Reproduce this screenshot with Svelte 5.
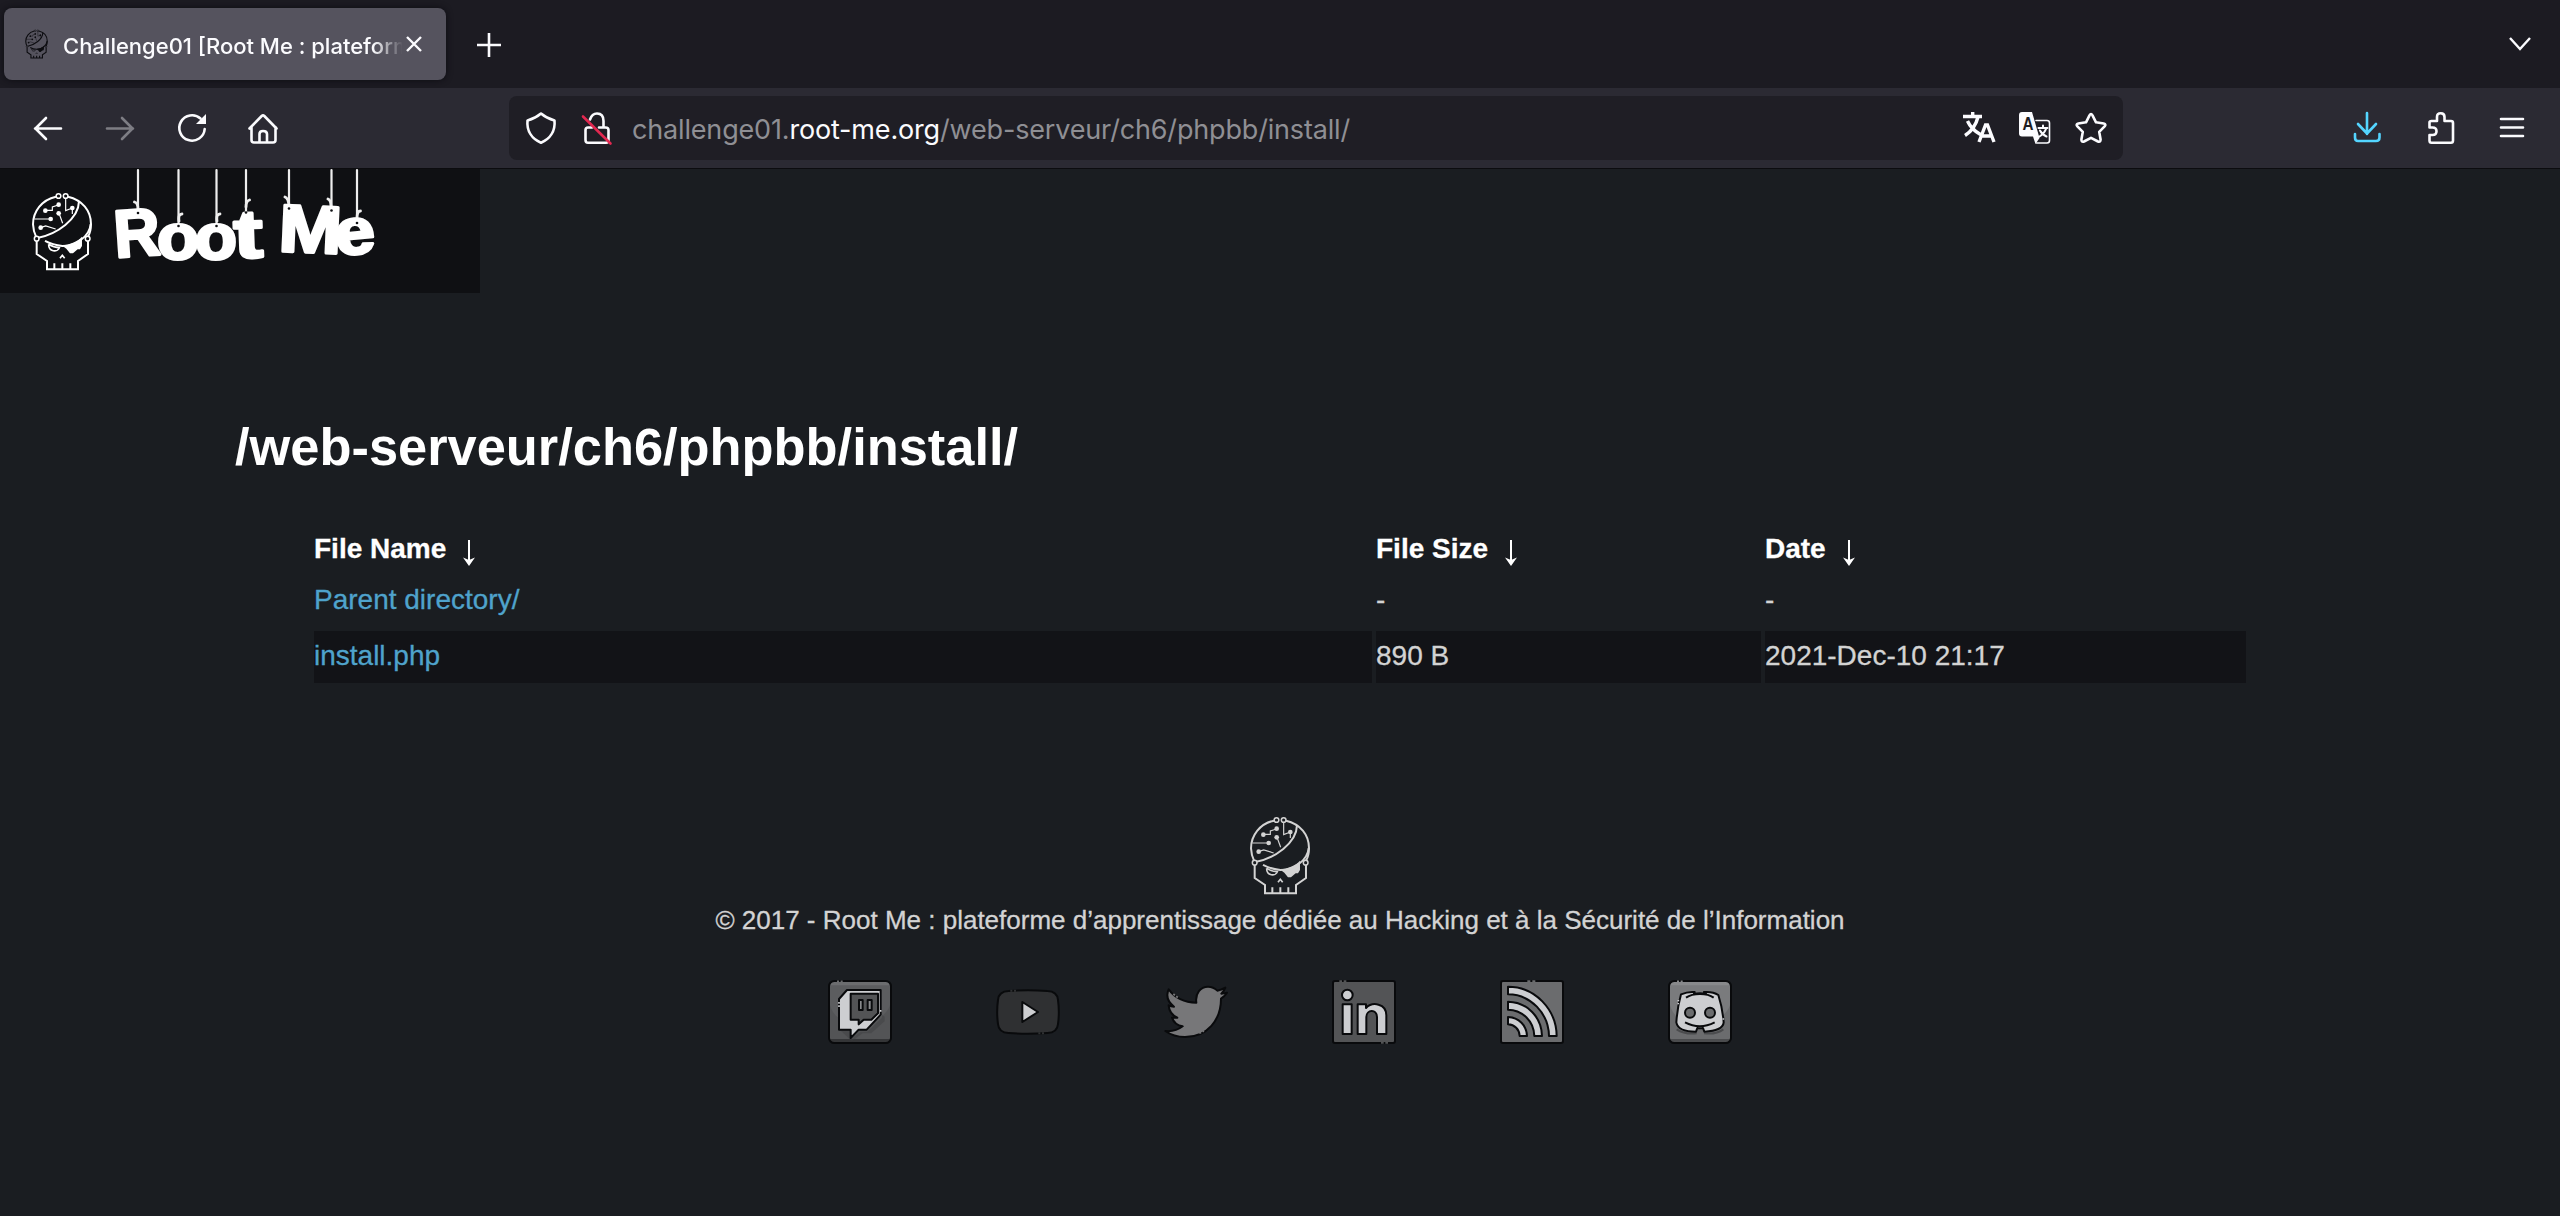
<script>
  const columns = ['File Name', 'File Size', 'Date'];
  const rows = [
    { name: 'Parent directory/', size: '-', date: '-' },
    { name: 'install.php', size: '890 B', date: '2021-Dec-10 21:17' }
  ];
</script>

{#snippet skull()}
  <svg class="skull" viewBox="146 46 186 238" fill="none" stroke="currentColor" stroke-width="6">
    <path d="M221 60C178 69 152 105 152 143C153 160 157 172 161 180M257 60C300 70 326 102 326 142C326 160 322 172 317 180" />
    <g stroke-width="4.500">
      <circle cx="228.500" cy="58" r="7" /><circle cx="250" cy="58" r="7" />
      <circle cx="163" cy="186" r="7" /><circle cx="316" cy="186" r="7" />
    </g>
    <path d="M290 74C289 128 222 173 168 183M325 142C322 178 282 208 240 208C219 206 203 201 188 193" />
    <path d="M163 193V232L194 253V278H287V253L317 232V193M216 260V278M240 260V278M264 260V278" />
    <path stroke-width="5" d="M199 203C198 226 226 228 231 213C222 213 208 209 199 203M233 245L240 236L247 245" />
    <path stroke="none" fill="currentColor" d="M238 206C265 204 286 194 299 180V208L293 218H286L272 230H263L252 216Z" />
    <path stroke-width="3.500" d="M190 101H210V91L228 85M156 127H204M175 153L190 148L220 157M230 110L241 140M250 65V102L270 94V112" />
    <g stroke="none" fill="currentColor">
      <circle cx="189" cy="102" r="7" /><circle cx="229" cy="84" r="7" /><circle cx="205" cy="127" r="7" />
      <circle cx="175" cy="153" r="7" /><circle cx="229" cy="110" r="7" /><circle cx="270" cy="94" r="7" />
    </g>
  </svg>
{/snippet}

<div class="window">
  <div class="tabbar">
    <div class="tab">
      <span class="favicon">{@render skull()}</span>
      <span class="title">Challenge01 [Root Me : plateforme</span>
      <svg class="close" viewBox="0 0 16 16"><path d="M1 1L15 15M15 1L1 15" /></svg>
    </div>
    <svg class="plus" viewBox="0 0 24 24"><path d="M12 0V24M0 12H24" /></svg>
    <svg class="chevron" viewBox="0 0 24 16"><path d="M2 2L12 13L22 2" /></svg>
  </div>

  <div class="toolbar">
    <div class="nav">
      <svg class="ic" viewBox="0 0 32 32"><path d="M29 16.500H3M14 6L3.500 16.500L14 27" /></svg>
      <svg class="ic dim" viewBox="0 0 32 32"><path d="M3 16.500H29M18 6L28.500 16.500L18 27" /></svg>
      <svg class="ic" viewBox="0 0 32 32"><path d="M28.700 17A12.700 12.700 0 1 1 24.500 6.500" /><path class="solid" d="M30 2V12H20Z" /></svg>
      <svg class="ic" viewBox="0 0 32 32"><path d="M1.500 16.500L13.700 4Q15 2.800 16.300 4L28.500 16.500M3.500 15V28Q3.500 30.500 6 30.500H25Q27.500 30.500 27.500 28V15M11.500 30V22Q11.500 19 15 19Q19 19 19 22V30" /></svg>
    </div>
    <div class="urlbar">
      <svg class="ic" viewBox="0 0 32 32"><path d="M16 1.500C12 5 8 7 2.500 8.500C1.500 19 7 27 16 30.800C25 27 30.500 19 29.500 8.500C24 7 20 5 16 1.500Z" /></svg>
      <svg class="ic lock" viewBox="0 0 32 32"><path d="M9 7.500Q11 1.500 16 1.500Q22.500 1.500 22.500 9V15.500M7 15.500Q4.500 15.500 4.500 18V28Q4.500 30.800 7 30.800H25Q27.500 30.800 27.500 28V18Q27.500 15.500 24.500 15.500H18M7 15.500H11" /><path class="slash" d="M2 4.500L29.500 31.500" /></svg>
      <span class="url">challenge01.<b>root-me.org</b>/web-serveur/ch6/phpbb/install/</span>
      <div class="actions">
        <svg class="ic thick" viewBox="0 0 32 32"><path d="M0 4.500H19M9.700 0V5M15 5C13 13 9 19 2 23.500M4.500 9C7 14.500 12 19.500 17.500 22.500M16 30L22.500 13H24.500L31 30M18.500 24H28.500" /></svg>
        <svg class="ic" viewBox="0 0 32 32"><path class="thin" d="M17 8.500H28Q30.500 8.500 30.500 11V28.500Q30.500 31 28 31H17.500" /><path class="solid" d="M3 0H13L20.500 26L16.500 32L14 24.500H3Q0 24.500 0 21.500V3Q0 0 3 0Z" /><text class="a" x="3.500" y="18" textLength="11" lengthAdjust="spacingAndGlyphs">A</text><path class="mid" d="M19.500 16H28.500M24 13.500V16M27 17Q25 22 20.500 24.500M21 18.500Q23 22.500 27.500 24.500" /></svg>
        <svg class="ic" viewBox="0 0 32 32"><path d="M14.500 3.300Q16 0.800 17.500 3.300L21 10.300L28.700 11.500Q31.500 12.200 29.600 14.300L24.200 19.800L25.600 27.600Q25.600 30.600 23 29.500L16 25.800L9 29.500Q6.400 30.600 6.400 27.600L7.800 19.800L2.400 14.300Q0.500 12.200 3.300 11.500L11 10.300Z" /></svg>
      </div>
    </div>
    <div class="tools">
      <svg class="ic blue" viewBox="0 0 32 32"><path d="M15 1V22M6 12L15 21.500L24 12M3 22V25.500Q3 29 6 29H24Q27.500 29 27.500 25.500V22" /></svg>
      <svg class="ic" viewBox="0 0 32 32"><path d="M5.500 15.500V10.500Q5.500 9 7.500 9H13V5Q13 1.200 16.800 1.200Q20.500 1.200 20.500 5V9H27Q29 9 29 11V28.500Q29 30.800 27 30.800H7.500Q5.500 30.800 5.500 28.500V23H8.500Q12.500 23 12.500 19.200Q12.500 15.500 8.500 15.500Z" /></svg>
      <svg class="ic" viewBox="0 0 32 32"><path d="M5 7H27M5 15.500H27M5 24H27" /></svg>
    </div>
  </div>

  <header>
    <span class="brand">{@render skull()}</span>
    <svg class="wordmark" viewBox="110 169 270 100">
      <g class="strings">
        <path d="M138 170V213M178.500 170V224M216.500 170V224M246 170V212M289 170V208M331.500 170V210M357 170V222" />
        <path class="knot" d="M138 209Q138 203 134.500 202M179 221Q178 214 182 214M217 221Q216 214 220 214M246 207Q246 201 249.500 200M289 205Q288 198 285 197M331 207Q331 200 328 199M357 218Q357 211 360.500 211" />
      </g>
      <g class="letters">
        <text class="cap" transform="translate(115.500 257.500) rotate(-4)" textLength="46" lengthAdjust="spacingAndGlyphs">R</text>
        <text class="low" x="157" y="258.500" textLength="42" lengthAdjust="spacingAndGlyphs">o</text>
        <text class="low" x="195" y="258.500" textLength="42" lengthAdjust="spacingAndGlyphs">o</text>
        <text class="tee" transform="translate(234.500 258) rotate(-2)" textLength="29" lengthAdjust="spacingAndGlyphs">t</text>
        <text class="cap" transform="translate(278 251) rotate(2.500)" textLength="63" lengthAdjust="spacingAndGlyphs">M</text>
        <text class="low" transform="translate(336.500 255.500) rotate(-5)" textLength="40" lengthAdjust="spacingAndGlyphs">e</text>
      </g>
      <g class="holes">
        <circle cx="138" cy="213" r="1.300" /><circle cx="178.500" cy="226" r="1.300" /><circle cx="216.500" cy="226" r="1.300" />
        <circle cx="246" cy="212.500" r="1.300" /><circle cx="289" cy="208.500" r="1.300" /><circle cx="331.500" cy="210.500" r="1.300" /><circle cx="357" cy="223" r="1.300" />
      </g>
    </svg>
  </header>

  <main>
    <h1>/web-serveur/ch6/phpbb/install/</h1>
    <div class="list">
      <div class="row head">
        {#each columns as label}
          <div class="cell">{label}<svg class="sort" viewBox="0 0 12 26"><path d="M6 0V24" /><path class="tip" d="M0 17.500L6 20L12 17.500L6 26Z" /></svg></div>
        {/each}
      </div>
      {#each rows as row, i}
        <div class="row" class:dark={i % 2 === 1}>
          <div class="cell link">{row.name}</div>
          <div class="cell">{row.size}</div>
          <div class="cell">{row.date}</div>
        </div>
      {/each}
    </div>
  </main>

  <footer>
    {@render skull()}
    <p>© 2017 - Root Me : plateforme d’apprentissage dédiée au Hacking et à la Sécurité de l’Information</p>
    <div class="social">
      <svg viewBox="0 0 192 192">
        <rect x="3" y="3" width="186" height="186" rx="16" fill="#535456" />
        <path d="M6 20Q6 6 20 6H172Q186 6 186 20V75C180 95 160 115 130 125H62C30 120 12 100 6 75Z" fill="#5c5d5f" />
        <path d="M6 16Q8 6 20 6H172Q184 6 186 16Z" fill="#6c6d6f" /><path d="M6 177H186Q184 187 172 187H20Q8 187 6 177Z" fill="#343537" />
        <rect class="edge" x="3" y="3" width="186" height="186" rx="16" />
        <path d="M38 152H68V178L98 155H118L162 113V104L170 110V124L130 160H104L72 184Z" fill="#3c3d3f" opacity=".4" />
        <path class="edge" fill="#cdced1" d="M57 30H158V104L116 149H92L68 174V149H33V57Z" />
        <path class="edge" fill="#535456" d="M68 41H150V100L130 119H107L92 133V119H68Z" />
        <path class="edge" fill="#8a8b8e" d="M93 60H104V90H93ZM119 60H131V90H119Z" />
        <path d="M27 4H45" stroke="#6c6d6f" stroke-width="5" stroke-dasharray="6 5" />
        <path d="M33 66V84M158 90V97" stroke="#cdced1" stroke-width="5" stroke-dasharray="5 5" />
      </svg>
      <svg viewBox="0 0 192 192">
        <path class="edge" fill="#2f3032" d="M38 33Q96 28 154 33Q184 34 186 60Q191 96 186 132Q184 158 154 159Q96 163 38 159Q8 158 6 132Q1 96 6 60Q8 34 38 33Z" />
        <path class="edge" fill="#cdced1" d="M79 66L126 96L79 126Z" />
        <path d="M43 32H64M127 160H149" stroke="#2f3032" stroke-width="6" stroke-dasharray="6 5" />
      </svg>
      <svg viewBox="0 0 192 192">
        <path class="edge" fill="#777779" d="M14 28C30 50 58 67 97 68C93 40 110 20 132 20C143 20 153 25 160 32Q172 30 184 23Q180 34 172 41Q180 41 189 38Q182 49 171 56C171 120 130 171 63 171Q29 171 4 153Q34 156 56 139Q32 136 24 113H40Q16 102 14 76Q21 80 30 80Q1 57 14 28Z" />
        <path d="M28 42L42 53M106 160L120 153" stroke="#777779" stroke-width="5" stroke-dasharray="6 5" />
      </svg>
      <svg viewBox="0 0 192 192">
        <rect class="edge" x="3" y="3" width="186" height="186" rx="6" fill="#535456" />
        <circle class="edge" cx="46" cy="45" r="16" fill="#cdced1" />
        <path class="edge" fill="#cdced1" d="M32 73H59V162H32ZM77 73H102V84C121 64 163 70 163 106V162H135V111C135 86 103 88 103 111V162H77Z" />
        <path d="M22 4H45M147 188H171" stroke="#535456" stroke-width="6" stroke-dasharray="8 5" />
      </svg>
      <svg viewBox="0 0 192 192">
        <rect class="edge" x="3" y="3" width="186" height="186" rx="6" fill="#6b6c6e" />
        <path class="edge" fill="#cdced1" d="M24 20C105 20 169 88 170 168H147C146 100 92 43 24 43ZM24 65C82 66 125 112 126 168H103C102 124 68 90 24 89ZM24 111C57 112 80 137 81 168H59C58 148 44 134 24 133Z" />
        <path d="M82 4H108" stroke="#6b6c6e" stroke-width="6" stroke-dasharray="9 6" />
      </svg>
      <svg viewBox="0 0 192 192">
        <rect x="3" y="3" width="186" height="186" rx="16" fill="#6b6c6e" />
        <path d="M6 20Q6 6 20 6H172Q186 6 186 20V75C180 95 160 115 130 125H62C30 120 12 100 6 75Z" fill="#7a7b7d" />
        <path d="M6 16Q8 6 20 6H172Q184 6 186 16Z" fill="#88898b" /><path d="M6 177H186Q184 187 172 187H20Q8 187 6 177Z" fill="#4b4c4e" />
        <rect class="edge" x="3" y="3" width="186" height="186" rx="16" />
        <path class="edge shade" d="M26 148Q50 164 86 160M108 160Q145 164 166 148" />
        <path class="edge" fill="#cdced1" d="M39 43Q60 34 80 36L78 41Q96 38 114 41L108 36Q135 34 151 45Q164 85 167 127Q165 152 109 155L105 144Q96 146 88 144L84 155Q30 155 25 127Q28 83 39 43Z" />
        <path class="edge" d="M54 53Q70 42 96 42Q122 42 137 53M51 127Q95 150 140 127" />
        <circle class="edge" cx="66" cy="98" r="15" fill="#6b6c6e" /><circle class="edge" cx="126" cy="98" r="15" fill="#6b6c6e" />
        <path d="M27 4H45" stroke="#88898b" stroke-width="5" stroke-dasharray="6 5" />
        <path d="M31 60V74M166 115V121" stroke="#cdced1" stroke-width="5" stroke-dasharray="4 5" />
      </svg>
    </div>
  </footer>
</div>

<style>
  :global(body) { margin: 0; background: #1a1d21; }
  .window { width: 2560px; height: 1216px; overflow: hidden; background: #1a1d21; color: #d3d3d3; font-family: "Liberation Sans", Arial, sans-serif; font-size: 28px; }
  svg { display: block; flex: none; overflow: visible; }
  .tabbar { display: flex; align-items: center; height: 88px; box-sizing: border-box; padding: 0 28px 0 4px; background: #1c1b22; font-family: Inter, sans-serif; }
  .tab { display: flex; align-items: center; width: 442px; height: 72px; box-sizing: border-box; padding: 0 24px 0 21px; border-radius: 8px; background: #55535e; box-shadow: 0 0 6px #0d0c12; }
  .favicon { color: #0c0c10; width: 23px; margin-right: 15px; }
  .favicon .skull { width: 23px; height: 30px; stroke-width: 9; }
  .title { flex: 1; overflow: hidden; white-space: nowrap; font-size: 22px; font-weight: 500; line-height: 32px; padding-top: 3px; color: #fbfbfe; mask-image: linear-gradient(to right, #000 310px, transparent 340px); }
  .close { width: 16px; height: 16px; margin-left: 4px; }
  .close path, .plus path, .chevron path { fill: none; stroke: #fbfbfe; stroke-width: 2.4; }
  .plus { width: 24px; height: 24px; margin: 2px 0 0 31px; }
  .plus path { stroke-width: 2.6; }
  .chevron { width: 24px; height: 16px; margin-left: auto; }
  .toolbar { display: flex; align-items: center; height: 81px; box-sizing: border-box; padding: 0 32px; border-bottom: 1px solid #0c0c0f; background: #2b2a33; }
  .nav, .tools { display: flex; gap: 40px; }
  .ic { width: 32px; height: 32px; fill: none; stroke: #fbfbfe; stroke-width: 2.6; stroke-linecap: round; stroke-linejoin: round; }
  .ic .solid { fill: #fbfbfe; stroke: none; }
  .dim { opacity: 0.4; }
  .blue { stroke: #54d5ff; }
  .thick { stroke-width: 3.4; stroke-linecap: butt; stroke-linejoin: miter; }
  .thin { stroke-width: 1.6; }
  .mid { stroke-width: 2; }
  .slash { stroke: #e22850; }
  .a { font: bold 19px "Liberation Sans", sans-serif; fill: #1c1b22; stroke: none; }
  .urlbar { display: flex; align-items: center; width: 1614px; height: 64px; box-sizing: border-box; padding: 0 16px; margin-left: 229px; border-radius: 8px; background: #1f1e25; }
  .lock { margin-left: 24px; }
  .url { margin-left: 19px; padding-top: 3px; font-family: Inter, sans-serif; font-size: 27px; line-height: 40px; letter-spacing: -0.17px; white-space: nowrap; color: #8f8f94; }
  .url b { font-weight: 400; color: #fbfbfe; }
  .actions { display: flex; gap: 24px; margin-left: auto; }
  .tools { margin-left: auto; }
  header { display: flex; width: 480px; height: 124px; background: #0f1013; }
  .brand { width: 62px; padding: 23px 17px 0 31px; color: #fff; }
  .skull { width: 62px; height: 79.300px; }
  .wordmark { width: 270px; height: 100px; }
  .strings { fill: none; stroke: #eee; stroke-width: 2.2; stroke-linecap: round; }
  .knot { stroke-width: 2.8; }
  .letters { font-family: "Liberation Sans", Arial, sans-serif; font-weight: 700; fill: #fff; stroke: #fff; stroke-width: 3; stroke-linejoin: round; }
  .cap { font-size: 67px; }
  .low { font-size: 65px; }
  .tee { font-size: 68px; }
  .holes { fill: #0f1013; }
  main { padding: 124px 0 0 235px; }
  h1 { margin: 0; font-size: 52.400px; line-height: 60px; color: #fff; }
  .list { width: 1932px; padding: 50px 0 0 79px; display: grid; gap: 4px; }
  .row { display: grid; grid-template-columns: 1058px 385px 481px; gap: 4px; }
  .cell { height: 52px; line-height: 49px; white-space: nowrap; -webkit-text-stroke: 0.3px currentColor; }
  .head .cell { display: flex; align-items: center; height: 44px; line-height: 46px; font-weight: 700; color: #fff; }
  .sort { width: 12px; height: 26px; margin: 7px 0 0 17px; fill: #fff; stroke: #fff; stroke-width: 2; }
  .tip { stroke: none; }
  .dark .cell { background: #121317; }
  .link { color: #4fa3cc; }
  footer { display: flex; flex-direction: column; align-items: center; padding-top: 133px; }
  p { margin: 9px 0 0; font-size: 26px; line-height: 32px; white-space: nowrap; -webkit-text-stroke: 0.3px currentColor; }
  .social { display: flex; gap: 104px; margin-top: 44px; }
  .social svg { width: 64px; height: 64px; }
  .edge { stroke: #090a0c; stroke-width: 6; stroke-linejoin: round; }
  .edge:not([fill]) { fill: none; }
  .shade { stroke: #4b4c4e; }
</style>
